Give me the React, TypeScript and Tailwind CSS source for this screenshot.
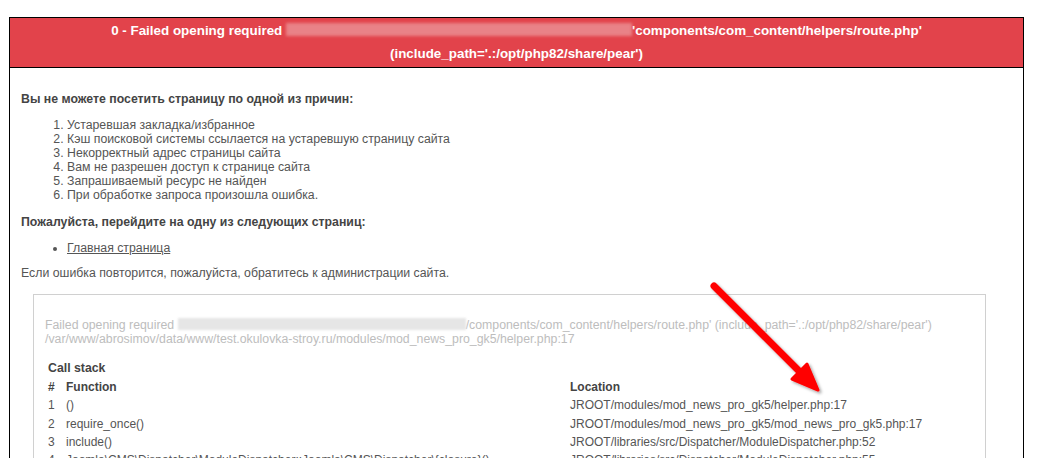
import React from 'react'

const reasons = [
  'Устаревшая закладка/избранное',
  'Кэш поисковой системы ссылается на устаревшую страницу сайта',
  'Некорректный адрес страницы сайта',
  'Вам не разрешен доступ к странице сайта',
  'Запрашиваемый ресурс не найден',
  'При обработке запроса произошла ошибка.',
]

const stack = [
  ['1', '()', 'JROOT/modules/mod_news_pro_gk5/helper.php:17'],
  ['2', 'require_once()', 'JROOT/modules/mod_news_pro_gk5/mod_news_pro_gk5.php:17'],
  ['3', 'include()', 'JROOT/libraries/src/Dispatcher/ModuleDispatcher.php:52'],
  ['4', 'Joomla\\CMS\\Dispatcher\\ModuleDispatcher::Joomla\\CMS\\Dispatcher\\{closure}()', 'JROOT/libraries/src/Dispatcher/ModuleDispatcher.php:55'],
]

function Arrow() {
  return (
    <svg className="absolute left-0 top-0 pointer-events-none" width="1037" height="458">
      <defs>
        <filter id="sh" x="-20%" y="-20%" width="140%" height="140%">
          <feDropShadow dx="2" dy="2" stdDeviation="1.5" floodColor="#000" floodOpacity="0.35" />
        </filter>
      </defs>
      <g filter="url(#sh)">
        <line x1="714" y1="286" x2="800" y2="372" stroke="#f00" strokeWidth="7" strokeLinecap="round" />
        <polygon points="818,390 792,379 807,364" fill="#f00" stroke="#f00" strokeWidth="3" strokeLinejoin="round" />
      </g>
    </svg>
  )
}

export default function App() {
  return (
    <div className="relative w-[1037px] h-[458px] overflow-hidden bg-white font-['Liberation_Sans',Arial,sans-serif]">
      <div className="ml-[9px] mt-[17px] w-[1015px] border border-black">
        {/* error header */}
        <div className="h-[50px] border-b border-black bg-[#e2434b] pt-[1px] text-center text-[13.4px] font-bold leading-[23px] text-white">
          <div>
            0 - Failed opening required{' '}
            <span className="inline-block h-[13px] w-[346px] align-[-1px] bg-[#e98287] blur-[1.5px]" />
            'components/com_content/helpers/route.php'
          </div>
          <div>(include_path='.:/opt/php82/share/pear')</div>
        </div>

        {/* body */}
        <div className="px-[11px] pb-[40px] text-[12.3px] text-[#555]">
          <p className="mt-[24px] font-bold leading-[15px] text-[#444]">Вы не можете посетить страницу по одной из причин:</p>
          <ol className="mt-[11px] list-decimal pl-[46px] leading-[14px]">
            {reasons.map((r) => (
              <li key={r}>{r}</li>
            ))}
          </ol>
          <p className="mt-[13px] font-bold leading-[15px] text-[#444]">Пожалуйста, перейдите на одну из следующих страниц:</p>
          <ul className="mt-[11px] list-disc pl-[46px] leading-[14px]">
            <li>
              <a href="#" className="underline">Главная страница</a>
            </li>
          </ul>
          <p className="mt-[11px] leading-[15px]">Если ошибка повторится, пожалуйста, обратитесь к администрации сайта.</p>

          {/* debug box */}
          <div className="ml-[12px] mt-[13px] w-[953px] border border-[#d0d0d0] px-[11px] pt-[23px] pb-[20px]">
            <div className="leading-[14px] text-[#bdbdbd]">
              <div>
                Failed opening required{' '}
                <span className="inline-block h-[12px] w-[288px] align-[-1px] bg-[#e6e6e6] blur-[1px]" />
                /components/com_content/helpers/route.php' (include_path='.:/opt/php82/share/pear')
              </div>
              <div>/var/www/abrosimov/data/www/test.okulovka-stroy.ru/modules/mod_news_pro_gk5/helper.php:17</div>
            </div>
            <div className="mt-[15px] pl-[3px] font-bold leading-[15px] text-[#444]">Call stack</div>
            <table className="mt-[2px] ml-[3px] border-collapse text-[12px]">
              <tbody className="leading-[18.3px]">
                <tr className="font-bold text-[#444]">
                  <td className="w-[18px] p-0">#</td>
                  <td className="w-[504px] p-0">Function</td>
                  <td className="p-0">Location</td>
                </tr>
                {stack.map(([n, f, l]) => (
                  <tr key={n}>
                    <td className="p-0">{n}</td>
                    <td className="p-0">{f}</td>
                    <td className="p-0">{l}</td>
                  </tr>
                ))}
              </tbody>
            </table>
          </div>
        </div>
      </div>
      <Arrow />
    </div>
  )
}
